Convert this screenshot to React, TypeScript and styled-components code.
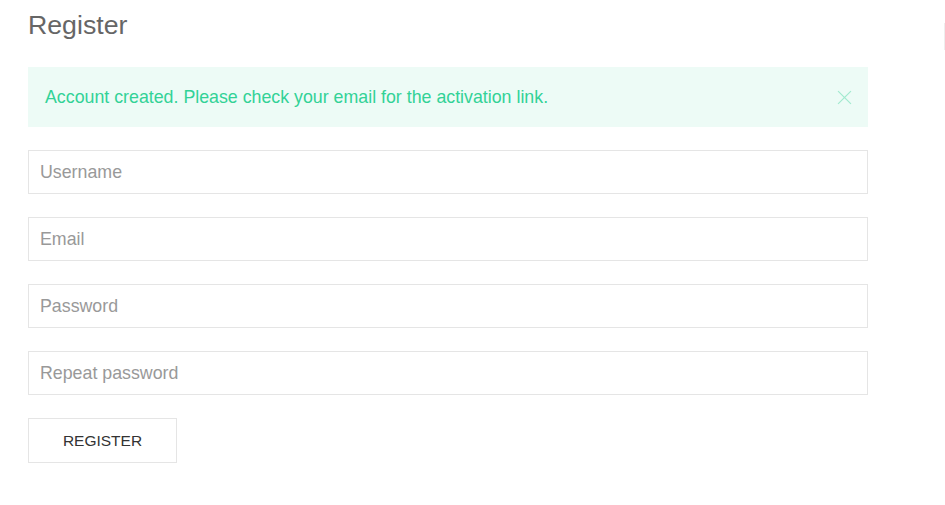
import React from "react";
import styled, { createGlobalStyle } from "styled-components";

const Global = createGlobalStyle`
  html, body { margin: 0; padding: 0; background: #fff; }
  body { font-family: "Liberation Sans", Arial, sans-serif; font-size: 17.8px; line-height: 1.5; color: #666; }
  * { box-sizing: border-box; }
`;

const Page = styled.div`
  padding: 0 77px 0 28px;
  width: 945px;
`;

const Title = styled.h1`
  margin: 0;
  padding-top: 7px;
  font-size: 26.7px;
  font-weight: 400;
  line-height: 37px;
  color: #666;
`;

const Alert = styled.div`
  margin-top: 23px;
  background: #edfbf6;
  color: #32d296;
  height: 60px;
  padding: 0 16px 0 17px;
  display: flex;
  align-items: center;
  justify-content: space-between;
  font-size: 17.8px;
`;

const Close = styled.button`
  border: 0;
  background: none;
  padding: 0;
  width: 15px;
  height: 15px;
  display: flex;
  color: #32d296;
  opacity: 0.4;
  cursor: pointer;
`;

const Form = styled.form`
  margin-top: 23px;
  display: flex;
  flex-direction: column;
  gap: 23px;
`;

const Input = styled.input`
  height: 44px;
  width: 100%;
  border: 1px solid #e5e5e5;
  padding: 0 11px;
  font-family: "Liberation Sans", Arial, sans-serif;
  font-size: 17.8px;
  color: #666;
  background: #fff;
  outline: none;
  &::placeholder { color: #999; }
`;

const Button = styled.button`
  align-self: flex-start;
  height: 45px;
  width: 149px;
  border: 1px solid #e5e5e5;
  background: transparent;
  color: #333;
  font-family: "Liberation Sans", Arial, sans-serif;
  font-size: 15.5px;
  text-transform: uppercase;
  cursor: pointer;
`;

const EdgeLine = styled.div`
  position: fixed;
  left: 944px;
  top: 23px;
  width: 1px;
  height: 27px;
  background: #eeeeee;
`;

export default function App() {
  return (
    <>
      <Global />
      <Page>
        <Title>Register</Title>
        <Alert>
          <span>Account created. Please check your email for the activation link.</span>
          <Close aria-label="Close">
            <svg width="15" height="15" viewBox="0 0 14 14">
              <line x1="1" y1="1" x2="13" y2="13" stroke="currentColor" strokeWidth="1.1" />
              <line x1="13" y1="1" x2="1" y2="13" stroke="currentColor" strokeWidth="1.1" />
            </svg>
          </Close>
        </Alert>
        <Form onSubmit={(e) => e.preventDefault()}>
          <Input type="text" placeholder="Username" />
          <Input type="email" placeholder="Email" />
          <Input type="password" placeholder="Password" />
          <Input type="password" placeholder="Repeat password" />
          <Button type="submit">Register</Button>
        </Form>
      </Page>
      <EdgeLine />
    </>
  );
}
